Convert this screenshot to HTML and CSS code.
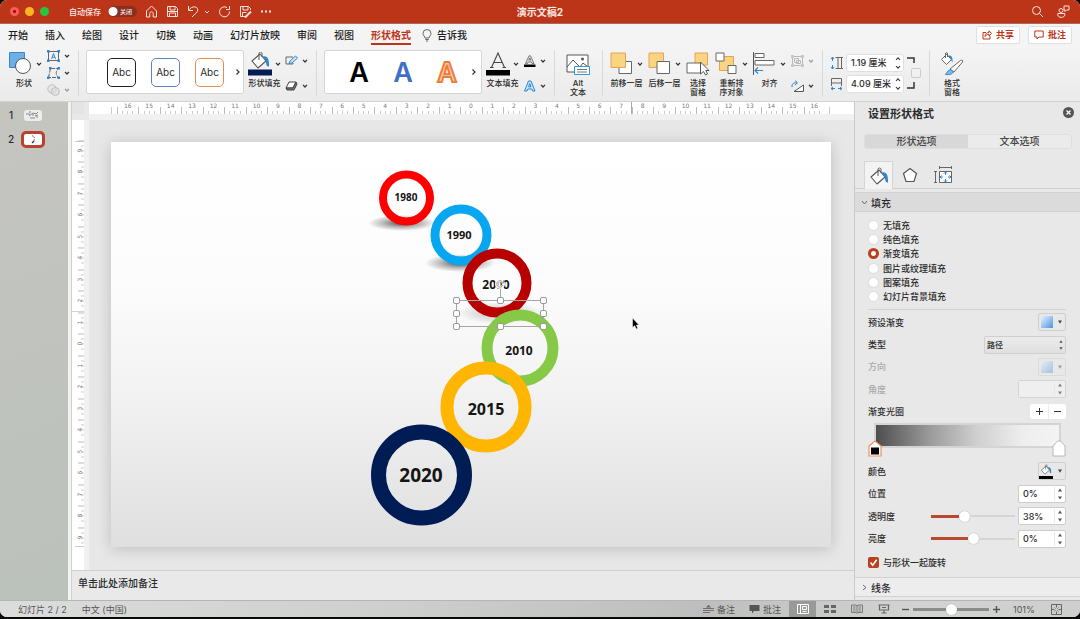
FILE: index.html
```html
<!DOCTYPE html>
<html lang="zh-CN">
<head>
<meta charset="utf-8">
<title>演示文稿2</title>
<link rel="stylesheet" href="styles.css">
</head>
<body>
<svg class="defs" aria-hidden="true">
  <symbol id="chev" viewBox="0 0 6 6"><path d="M1 1.8 3 4 5 1.8" fill="none" stroke="#333" stroke-width="1.2"/></symbol>
  <symbol id="bucket" viewBox="0 0 24 18"><path d="M4 10 12 3l6 7-8 7z" fill="#fff" stroke="#555" stroke-width="1.1" stroke-linejoin="round"/><path d="M11 9V2.500c0-2 3-2 3 0V6" fill="none" stroke="#555"/><path d="M14.500 5.500c4-1 7 1 6.500 10-2 0-3-1-3-5.500z" fill="#2b87d1"/></symbol>
  <symbol id="updown" viewBox="0 0 6 14"><path d="M1 4 3 1.800 5 4M1 10 3 12.200 5 10" fill="none" stroke="#333" stroke-width="1.100"/></symbol>
  <symbol id="tri" viewBox="0 0 6 14"><path d="M1 4.500 3 1.500 5 4.500zM1 9.500 3 12.500 5 9.500z" fill="#555"/></symbol>
  <symbol id="tridown" viewBox="0 0 6 6"><path d="M1 1.500h4L3 4.800z" fill="#444"/></symbol>
</svg>
<div class="window">
  <header class="titlebar">
    <div class="lights"><span class="light close"></span><span class="light min"></span><span class="light max"></span></div>
    <label class="autosave">自动保存 <input type="checkbox" aria-label="自动保存"><span class="toggle">关闭</span></label>
    <div class="quick">
      <button aria-label="主页"><svg width="13" height="13" viewBox="0 0 13 13"><path d="M1.500 6 6.500 1l5 5v6H8.200V8.500c0-2.300-3.400-2.300-3.400 0V12H1.500z"/></svg></button>
      <button aria-label="保存"><svg width="13" height="13" viewBox="0 0 13 13"><path d="M1.500 1.500h8l2 2v8h-10zM4 1.500V5h5V1.500M3.500 11.500V8h6v3.500M1.500 6.500h10"/></svg></button>
      <button aria-label="撤消" class="undo"><svg width="13" height="13" viewBox="0 0 13 13"><path d="M1.500 1v4.500H6M1.800 5C5 .5 10.800 1.200 10.800 5c0 2.500-3 4-5.800 7"/></svg><svg width="6" height="6" viewBox="0 0 6 6"><path d="M1 2l2 2 2-2"/></svg></button>
      <button aria-label="重复"><svg width="13" height="13" viewBox="0 0 13 13"><path d="M9 2.500A5 5 0 1 0 11.500 6.500M11.500 1v3.500H8"/></svg></button>
      <button aria-label="另存为"><svg width="13" height="13" viewBox="0 0 13 13"><path d="M6 11.500H1.500v-10h8l2 2V5M4 1.500V5h5V1.500M3.500 11V7.500h4"/><path d="M6 12.500 12 6.500" stroke-width="2.500"/></svg></button>
      <button aria-label="更多"><svg width="12" height="13" viewBox="0 0 12 13"><path d="M1 6.500h2M5 6.500h2M9 6.500h2" stroke-width="2"/></svg></button>
    </div>
    <h1 class="doc-title">演示文稿2</h1>
    <div class="title-right">
      <button aria-label="搜索"><svg width="13" height="13" viewBox="0 0 13 13"><circle cx="5.500" cy="5.500" r="4"/><path d="m8.500 8.500 3.500 3.500"/></svg></button>
      <button aria-label="共享者"><svg width="13" height="13" viewBox="0 0 13 13"><circle cx="4" cy="5.500" r="2"/><path d="M.8 8.500h7v1.300c0 3.400-7 3.400-7 0zM7 1h5v4H9.500L8 6.500V5H7z"/></svg></button>
    </div>
  </header>

  <nav class="tabs">
    <a href="#">开始</a><a href="#">插入</a><a href="#">绘图</a><a href="#">设计</a><a href="#">切换</a><a href="#">动画</a><a href="#">幻灯片放映</a><a href="#">审阅</a><a href="#">视图</a><a href="#" class="active">形状格式</a>
    <a href="#" class="tell"><svg width="10" height="13" viewBox="0 0 10 13"><path d="M3 9C3 7.500 1 6.500 1 4.500a4 4 0 0 1 8 0C9 6.500 7 7.500 7 9zM3.300 10.500h3.400M4 12h2" fill="none" stroke="#666"/></svg>告诉我</a>
    <div class="tab-actions">
      <button><svg width="10" height="10" viewBox="0 0 10 10"><path d="M4 2.500H1v6.500h7V6M3 6.500c0-3 2-4 4-4V.8L9.500 3.500 7 6V4.300C5 4.300 4 5 3 6.500z"/></svg>共享</button>
      <button><svg width="10" height="10" viewBox="0 0 10 10"><path d="M.8 1h8.400v6H5L3 9V7H.8z"/></svg>批注</button>
    </div>
  </nav>

  <div class="ribbon">
    <button class="big wide left-label"><svg class="ico" width="24" height="24" viewBox="0 0 24 24"><path d="M.5 .5h15v15H.5z" fill="#6cb0ea" stroke="#3b87cc"/><circle cx="14" cy="14" r="7.500" fill="#fff" stroke="#555"/></svg><svg class="chev"><use href="#chev"/></svg><span>形状</span></button>
    <div class="stack">
      <button aria-label="文本框"><svg width="13" height="12" viewBox="0 0 13 12"><path d="M1.500 1.500h10v9h-10z" fill="none" stroke="#666"/><path d="M4.500 9 6.500 3.500 8.500 9M5.200 7.200h2.600" fill="none" stroke="#2b87d1"/><path d="M0 0h2.500v2.500H0zM10.500 0H13v2.500h-2.500zM0 9.500h2.500V12H0zM10.500 9.500H13V12h-2.500z" fill="#2b87d1"/></svg><svg class="chev"><use href="#chev"/></svg></button>
      <button aria-label="编辑形状"><svg width="13" height="12" viewBox="0 0 13 12"><path d="M1.500 10.500 3.500 1.500h8c-3 3-3 6 0 9z" fill="none" stroke="#666" stroke-dasharray="4 1"/><path d="M2 0h2.500v2.500H2zM10.500 0H13v2.500h-2.500zM0 9.500h2.500V12H0zM10.500 9.500H13V12h-2.500z" fill="#2b87d1"/></svg><svg class="chev"><use href="#chev"/></svg></button>
      <button aria-label="合并形状" disabled><svg width="13" height="12" viewBox="0 0 13 12"><circle cx="5" cy="5" r="4.200" fill="#ddd" stroke="#888"/><circle cx="8.300" cy="7.500" r="4" fill="#ccc" fill-opacity=".6" stroke="#888"/></svg><svg class="chev"><use href="#chev"/></svg></button>
    </div>
    <i class="sep"></i>
    <div class="cluster">
      <div class="gallery">
        <button class="abc black">Abc</button><button class="abc blue">Abc</button><button class="abc orange">Abc</button>
        <button class="next" aria-label="更多样式"><svg width="6" height="8" viewBox="0 0 6 8"><path d="M1.500 1.500 4 4 1.500 6.500" fill="none" stroke="#333" stroke-width="1.200"/></svg></button>
      </div>
      <button class="big wide"><svg class="ico" width="24" height="24" viewBox="0 0 24 24"><use href="#bucket" width="24" height="18" y="-1"/><path d="M0 17.500h24v6H0z" fill="#001c55"/></svg><svg class="chev"><use href="#chev"/></svg><span>形状填充</span></button>
      <div class="stack two">
        <button aria-label="形状轮廓"><svg width="13" height="12" viewBox="0 0 13 12"><path d="M8 2H1v7h7V8" fill="none" stroke="#666"/><path d="M4 8.500 5 6l5.500-5L12.500 3 7 8z" fill="#cfe6f8" stroke="#2b87d1"/></svg><svg class="chev"><use href="#chev"/></svg></button>
        <button aria-label="形状效果"><svg width="13" height="12" viewBox="0 0 13 12"><path d="M4 2h7L8 8H1z" fill="#fff" stroke="#444"/><path d="M1 8h7l3-6 1 2-3 6H2z" fill="#777" stroke="#444"/></svg><svg class="chev"><use href="#chev"/></svg></button>
      </div>
    </div>
    <i class="sep"></i>
    <div class="cluster">
      <div class="gallery art">
        <button aria-label="黑色填充"><svg width="28" height="38" viewBox="0 0 28 38"><text x="14" y="29" fill="#000">A</text></svg></button>
        <button aria-label="蓝色填充"><svg width="28" height="38" viewBox="0 0 28 38"><text x="14" y="29" fill="#3f6fc6">A</text></svg></button>
        <button aria-label="橙色轮廓"><svg width="28" height="38" viewBox="0 0 28 38"><text class="outlined" x="14" y="29" fill="#fbd0ae" stroke="#ed7d3a">A</text></svg></button>
        <button class="next" aria-label="更多艺术字"><svg width="6" height="8" viewBox="0 0 6 8"><path d="M1.500 1.500 4 4 1.500 6.500" fill="none" stroke="#333" stroke-width="1.200"/></svg></button>
      </div>
      <button class="big wide"><svg class="ico" width="24" height="24" viewBox="0 0 24 24"><path d="M5.500 15.500 12 1l6.500 14.500M8 10.500h8M4 15.500h3.500M16.500 15.500H20" fill="none" stroke="#444" stroke-width="1.100"/><path d="M0 18h24v5.500H0z"/></svg><svg class="chev"><use href="#chev"/></svg><span>文本填充</span></button>
      <div class="stack two">
        <button aria-label="文本轮廓"><svg width="13" height="12" viewBox="0 0 13 12"><path d="M2.500 8.500 6 .8h1.500l3.500 7.700H9L8.300 7H5.200L4.500 8.500zM5.800 5h2L6.800 3z" fill="#ddd" stroke="#666" stroke-width=".8"/><path d="M1 9.500h11.500V12H1z"/></svg><svg class="chev"><use href="#chev"/></svg></button>
        <button aria-label="文本效果"><svg width="13" height="12" viewBox="0 0 13 12"><path d="M1.500 11 5.500 1h2.500l4 10H9.500L8.800 9H4.800L4 11zM5.500 6.800h2.500L6.800 3.500z" fill="#cfe6f8" stroke="#2b87d1"/></svg><svg class="chev"><use href="#chev"/></svg></button>
      </div>
    </div>
    <i class="sep"></i>
    <button class="big single alt"><svg class="ico" width="24" height="24" viewBox="0 0 24 24"><path d="M1 3h21v17H1z" fill="#fff" stroke="#555"/><path d="m1 15 6-7 7 7 3-4 5 4" fill="none" stroke="#555"/><circle cx="16.500" cy="7" r="1.500" fill="#555"/><path d="M8.500 14.500h15v8h-15z" fill="#fff" stroke="#2b9bd4"/><path d="M11 17.500h10M11 20h10" stroke="#777"/></svg><span>Alt<br>文本</span></button>
    <i class="sep"></i>
    <button class="big wide"><svg class="ico" width="24" height="24" viewBox="0 0 24 24"><path d="M9 9.500h12.500v12H9z" fill="#fff" stroke="#666"/><path d="M1 1h14.500v14.500H1z" fill="#f9d583" stroke="#eba155"/></svg><svg class="chev"><use href="#chev"/></svg><span>前移一层</span></button>
    <button class="big wide"><svg class="ico" width="24" height="24" viewBox="0 0 24 24"><path d="M1 1h14.500v14.500H1z" fill="#f9d583" stroke="#eba155"/><path d="M9 9.500h12.500v12H9z" fill="#fff" stroke="#666"/></svg><svg class="chev"><use href="#chev"/></svg><span>后移一层</span></button>
    <button class="big single"><svg class="ico" width="24" height="24" viewBox="0 0 24 24"><path d="M9 1h12.500v12H9z" fill="#f9d583" stroke="#eba155"/><path d="M1 11h14v10H1z" fill="#fff" stroke="#666"/><path d="M14.500 10v12l3-2.500 2 3.500 2-1-1.700-3.500H23z" fill="#fff" stroke="#555"/></svg><span>选择<br>窗格</span></button>
    <button class="big wide"><svg class="ico" width="24" height="24" viewBox="0 0 24 24"><path d="M4.500 4.500h14v14h-14z" fill="#f9d583" stroke="#eba155"/><path d="M1 1h8v8H1zM13 13.500h8v8h-8z" fill="#fff" stroke="#666"/></svg><svg class="chev"><use href="#chev"/></svg><span>重新排<br>序对象</span></button>
    <button class="big wide"><svg class="ico" width="24" height="24" viewBox="0 0 24 24"><path d="M.5 0v23" stroke="#555"/><path d="M2 1.500h9v4H2zM2 8.500h19v4.500H2z" fill="#fff" stroke="#666"/><path d="M10 18.500H2M5 15.500 2 18.500l3 3" fill="none" stroke="#2b87d1" stroke-width="1.200"/></svg><svg class="chev"><use href="#chev"/></svg><span>对齐</span></button>
    <div class="stack two">
      <button aria-label="组合" disabled><svg width="13" height="12" viewBox="0 0 13 12"><path d="M1.500 1.500h10v9h-10zM3.500 3.500h4v4h-4zM5.500 5.500h4v3h-4z" fill="none" stroke="#777"/><path d="M0 0h3v3H0zM10 0h3v3h-3zM0 9h3v3H0zM10 9h3v3h-3z" fill="#999"/></svg><svg class="chev"><use href="#chev"/></svg></button>
      <button aria-label="旋转"><svg width="13" height="12" viewBox="0 0 13 12"><path d="M12.500 5v6.500H3z" fill="#fff" stroke="#555"/><path d="M1 7c-.5-3 2-5 5-4M4 .5l2.500 2.300L4 5" fill="none" stroke="#2b87d1"/></svg><svg class="chev"><use href="#chev"/></svg></button>
    </div>
    <i class="sep"></i>
    <div class="size">
      <svg width="13" height="14" viewBox="0 0 13 14"><path d="M5.500 1.500H13M5.500 12.500H13M8 1.500v11M11.500 1.500v11" stroke="#666" fill="none"/><path d="M2.500 1v4M2.500 9v4M1 3l1.500-2L4 3M1 11l1.500 2L4 11" stroke="#2b87d1" fill="none"/></svg>
      <div class="spin"><input type="text" value="1.19 厘米" aria-label="高度"><svg><use href="#updown"/></svg></div>
      <svg width="13" height="14" viewBox="0 0 13 14"><path d="M1.500 9V1.500h10V9M1.500 6h10" stroke="#666" fill="none"/><path d="M1 11.500h4M8 11.500h4M3 10 1 11.500 3 13M10 10l2 1.500-2 1.500" stroke="#2b87d1" fill="none"/></svg>
      <div class="spin"><input type="text" value="4.09 厘米" aria-label="宽度"><svg><use href="#updown"/></svg></div>
      <div class="lock"><svg width="8" height="7" viewBox="0 0 8 7"><path d="M0 1h7v5" fill="none" stroke="#333" stroke-width="1.500"/></svg><input type="checkbox" aria-label="锁定纵横比"><svg width="8" height="7" viewBox="0 0 8 7"><path d="M0 6h7V0" fill="none" stroke="#333" stroke-width="1.500"/></svg></div>
    </div>
    <i class="sep"></i>
    <button class="big single pane-btn"><svg class="ico" width="24" height="24" viewBox="0 0 24 24"><path d="M1.500 7.500 6.500 2.500l5 5-5 5z" fill="#fff" stroke="#666"/><path d="M5.500 6V2c0-1.800 2-1.800 2 0v3" fill="none" stroke="#666"/><path d="M8 3.500c3-.5 5 1 4.500 7l-2-3.500z" fill="#2b87d1"/><path d="M10 17 20.500 8.500c2-1 2.500 0 2 1.500L14 20z" fill="#fff" stroke="#666"/><path d="M13.500 20c-2 3-5 2.500-8 2.500 1.500-2 3-5.500 6-4.500z" fill="#7db9ea" stroke="#2b87d1"/></svg><span>格式<br>窗格</span></button>
  </div>

  <main class="work">
    <aside class="thumbs">
      <button class="thumb"><b>1</b><span class="mini"><svg width="18" height="11" viewBox="0 0 18 11"><path d="M2 4h4M5 6l4-3 3 1 2-2M6 8h5M11 6l3-1" fill="none" stroke="#789"/><path d="M5 2h2M12 7h2M8 5h2" stroke="#c65"/></svg></span></button>
      <button class="thumb current"><b>2</b><span class="mini"><svg width="18" height="11" viewBox="0 0 18 11"><path d="M8 1.500 10 3l.5 1.500" fill="none" stroke="#c33" stroke-dasharray="1.500 .5"/><path d="M10.500 5 10 7" stroke="#8a4"/><path d="M10 7 8 9" stroke="#236" stroke-width="1.500"/></svg></span></button>
    </aside>

    <section class="center">
      <div class="editor">
        <div class="corner"></div>
        <div class="ruler-h"><span>16</span><span>15</span><span>14</span><span>13</span><span>12</span><span>11</span><span>10</span><span>9</span><span>8</span><span>7</span><span>6</span><span>5</span><span>4</span><span>3</span><span>2</span><span>1</span><span>0</span><span>1</span><span>2</span><span>3</span><span>4</span><span>5</span><span>6</span><span>7</span><span class="mark">8</span><span>9</span><span>10</span><span>11</span><span>12</span><span>13</span><span>14</span><span>15</span><span>16</span></div>
        <div class="ruler-v"><span>9</span><span>8</span><span>7</span><span>6</span><span>5</span><span>4</span><span>3</span><span>2</span><span class="mark">1</span><span>0</span><span>1</span><span>2</span><span>3</span><span>4</span><span>5</span><span>6</span><span>7</span><span>8</span><span>9</span></div>
        <div class="canvas">
          <div class="slide">
            <svg viewBox="0 0 720 405" class="art-board">
              <defs><radialGradient id="sh"><stop offset="0" stop-color="#000" stop-opacity=".7"/><stop offset=".5" stop-color="#000" stop-opacity=".3"/><stop offset="1" stop-color="#000" stop-opacity="0"/></radialGradient></defs>
              <ellipse cx="291" cy="81" rx="34" ry="8" fill="url(#sh)"/>
              <circle cx="295.500" cy="56" r="23.500" stroke="#fe0000" stroke-width="8"/>
              <ellipse cx="349" cy="121" rx="35" ry="9" fill="url(#sh)"/>
              <circle cx="350" cy="93" r="26" stroke="#06a7f0" stroke-width="9"/>
              <ellipse cx="389" cy="171" rx="43" ry="11" fill="url(#sh)" opacity=".4"/>
              <circle cx="386" cy="141" r="29.500" stroke="#b90000" stroke-width="10"/>
              <circle cx="409" cy="206" r="33" stroke="#86c946" stroke-width="11"/>
              <circle cx="375" cy="265" r="39" stroke="#ffb600" stroke-width="13"/>
              <circle cx="310.500" cy="333" r="43" stroke="#001c55" stroke-width="15"/>
              <g class="years">
                <text x="295" y="59" font-size="10">1980</text>
                <text x="348" y="97" font-size="11">1990</text>
                <text x="385" y="147" font-size="12">2000</text>
                <text x="408" y="213" font-size="12">2010</text>
                <text x="375" y="273" font-size="16">2015</text>
                <text x="310" y="340" font-size="19">2020</text>
              </g>
              <g stroke="#a5a5a5" fill="none"><path d="M345.500 158.500h87v26h-87zM389.500 158.500v-12"/></g>
              <circle cx="389" cy="142" r="3.500" stroke="#fff" stroke-width="3"/>
              <path d="M391.500 140a3.200 3.200 0 1 0 .5 3M392.500 138.500v2.500H390" fill="none" stroke="#888" stroke-width=".9"/>
              <g fill="#fff" stroke="#999"><rect x="342.500" y="155.500" width="6" height="6" rx="1.500"/><rect x="386.500" y="155.500" width="6" height="6" rx="1.500"/><rect x="429.500" y="155.500" width="6" height="6" rx="1.500"/><rect x="342.500" y="168.500" width="6" height="6" rx="1.500"/><rect x="429.500" y="168.500" width="6" height="6" rx="1.500"/><rect x="342.500" y="181.500" width="6" height="6" rx="1.500"/><rect x="386.500" y="181.500" width="6" height="6" rx="1.500"/><rect x="429.500" y="181.500" width="6" height="6" rx="1.500"/></g>
              <path d="M521.500 176v9.500l2.200-1.800 1.600 3.300 1.500-.7-1.500-3.200h2.700z" fill="#000" stroke="#fff" stroke-width=".5"/>
            </svg>
          </div>
        </div>
      </div>
      <div class="notes">单击此处添加备注</div>
    </section>

    <aside class="pane">
      <div class="pane-head"><h2>设置形状格式</h2><button aria-label="关闭窗格"><svg width="11" height="11" viewBox="0 0 11 11"><circle cx="5.500" cy="5.500" r="5.500" fill="#555"/><path d="m3.500 3.500 4 4M7.500 3.500l-4 4" stroke="#fff" stroke-width="1.200"/></svg></button></div>
      <div class="segmented"><button class="on">形状选项</button><button>文本选项</button></div>
      <div class="icon-tabs">
        <button class="on" aria-label="填充与线条"><svg width="20" height="18" viewBox="2 0 20 18"><use href="#bucket" width="24" height="18"/></svg></button>
        <button aria-label="效果"><svg width="16" height="16" viewBox="0 0 16 16"><path d="m8 1.500 6.500 5-2.500 8H4l-2.500-8z" fill="#fff" stroke="#555" stroke-width="1.200"/></svg></button>
        <button aria-label="大小与属性"><svg width="18" height="18" viewBox="0 0 18 18"><path d="M5.500 5.500h12v11h-12z" fill="#fff" stroke="#666"/><path d="M5 1.500h13M5.500 0v3M17.500 0v3M1.500 5v12M0 5.500h3M0 16.500h3" stroke="#666"/><path d="M11.500 6v3M11.500 13v3M6 11h3M14 11h3M10 7.500 11.500 6 13 7.500M10 14.500l1.500 1.500 1.500-1.500M7.500 9.500 6 11l1.500 1.500M15.500 9.500 17 11l-1.500 1.500" fill="none" stroke="#2b87d1"/></svg></button>
      </div>
      <button class="section"><svg width="7" height="7" viewBox="0 0 7 7"><path d="M1 2l2.500 3L6 2" fill="none" stroke="#666"/></svg>填充</button>
      <div class="pane-body">
        <div class="radios">
          <label><input type="radio" name="fill">无填充</label>
          <label><input type="radio" name="fill">纯色填充</label>
          <label><input type="radio" name="fill" checked>渐变填充</label>
          <label><input type="radio" name="fill">图片或纹理填充</label>
          <label><input type="radio" name="fill">图案填充</label>
          <label><input type="radio" name="fill">幻灯片背景填充</label>
        </div>
        <div class="rows first">
          <div class="row"><span>预设渐变</span><button class="swatch" aria-label="预设渐变"><i class="grad"></i><svg><use href="#tridown"/></svg></button></div>
          <div class="row"><label for="kind">类型</label><div class="pick"><select id="kind"><option>路径</option></select><svg><use href="#tri"/></svg></div></div>
          <div class="row off"><span>方向</span><button class="swatch" aria-label="方向" disabled><i class="grad"></i><svg><use href="#tridown"/></svg></button></div>
          <div class="row off"><label for="angle">角度</label><div class="num"><input id="angle" type="text" disabled><svg><use href="#tri"/></svg></div></div>
          <div class="row"><span>渐变光圈</span><div class="plusminus"><button aria-label="添加光圈"><svg width="9" height="9" viewBox="0 0 9 9"><path d="M4.500 1v7M1 4.500h7"/></svg></button><button aria-label="删除光圈"><svg width="9" height="9" viewBox="0 0 9 9"><path d="M1 4.500h7"/></svg></button></div></div>
        </div>
        <div class="stops">
          <div class="bar"></div>
          <div class="handles">
            <button aria-label="光圈 1"><svg width="14" height="17" viewBox="0 0 14 17"><path d="M1 6 7 1l6 5v10H1z" fill="#fff" stroke="#e9955c" stroke-width="1.200"/><path d="M3 7.500h8v7H3z"/></svg></button>
            <button aria-label="光圈 2"><svg width="14" height="17" viewBox="0 0 14 17"><path d="M1 6 5.500 1h3L13 6v10H1z" fill="#fff" stroke="#aaa" stroke-width=".8"/></svg></button>
          </div>
        </div>
        <div class="rows">
          <div class="row"><span>颜色</span><button class="swatch" aria-label="颜色"><svg class="paint" width="14" height="15" viewBox="0 0 14 15"><use href="#bucket" width="14" height="11"/><path d="M0 12h14v3H0z"/></svg><svg><use href="#tridown"/></svg></button></div>
          <div class="row"><label for="pos">位置</label><div class="num"><input id="pos" type="text" value="0%"><svg><use href="#tri"/></svg></div></div>
          <div class="row"><label for="tr">透明度</label><input class="slider" type="range" value="38" style="--v:38%" aria-label="透明度滑块"><div class="num"><input id="tr" type="text" value="38%"><svg><use href="#tri"/></svg></div></div>
          <div class="row"><label for="br">亮度</label><input class="slider" type="range" value="50" style="--v:50%" aria-label="亮度滑块"><div class="num"><input id="br" type="text" value="0%"><svg><use href="#tri"/></svg></div></div>
        </div>
        <label class="rotate"><input type="checkbox" checked><svg width="11" height="11" viewBox="0 0 11 11"><path d="m2.500 5.500 2.200 2.700 4-5.500" fill="none" stroke="#fff" stroke-width="1.600"/></svg>与形状一起旋转</label>
      </div>
      <button class="section lines"><svg width="7" height="7" viewBox="0 0 7 7"><path d="M2 1l3 2.500L2 6" fill="none" stroke="#666"/></svg>线条</button>
    </aside>
  </main>

  <footer class="status">
    <span>幻灯片 2 / 2</span><span>中文 (中国)</span>
    <div class="status-right">
      <button class="txt"><svg width="11" height="10" viewBox="0 0 11 10"><path d="M0 4.500h11M0 6.500h11M0 8.500h7" stroke="#666" stroke-width=".9"/><path d="M3 3.500 5.500.8 8 3.500z" fill="#666"/></svg>备注</button>
      <button class="txt"><svg width="11" height="10" viewBox="0 0 11 10"><path d="M.5 1h10v6H5L3 9.500V7H.5z" fill="#555"/></svg>批注</button>
      <button class="view on" aria-label="普通视图"><svg width="12" height="10" viewBox="0 0 12 10"><path d="M.5.5h11v9H.5zM3.500.5v9M5.500 2.500h4v3h-4zM5.500 7.500h4" fill="none" stroke="#fff"/></svg></button>
      <button class="view" aria-label="幻灯片浏览"><svg width="12" height="10" viewBox="0 0 12 10"><path d="M0 1h5v3H0zM7 1h5v3H7zM0 6h5v3H0zM7 6h5v3H7z" fill="#666"/></svg></button>
      <button class="view" aria-label="阅读视图"><svg width="12" height="10" viewBox="0 0 12 10"><path d="M.5 1h4.500l1 1 1-1h4.500v7.500H7l-1 1-1-1H.5zM6 2v7M2 3h2.500M2 5h2.500M2 7h2.500M7.500 3H10M7.500 5H10M7.500 7H10" fill="none" stroke="#666" stroke-width=".8"/></svg></button>
      <button class="view" aria-label="幻灯片放映"><svg width="12" height="10" viewBox="0 0 12 10"><path d="M.5 1h11M1.500 1v5h9V1M6 6v2.500M3.500 9h5M4 3.500h4" fill="none" stroke="#666" stroke-width="1.200"/></svg></button>
      <div class="zoom"><button aria-label="缩小"><svg width="7" height="7" viewBox="0 0 7 7"><path d="M0 3.500h7" stroke="#555" stroke-width="1.400"/></svg></button><input type="range" class="zoomer" value="50" aria-label="缩放"><button aria-label="放大"><svg width="7" height="7" viewBox="0 0 7 7"><path d="M0 3.500h7M3.500 0v7" stroke="#555" stroke-width="1.400"/></svg></button></div>
      <span class="pct">101%</span>
      <button class="fit" aria-label="适应窗口"><svg width="11" height="11" viewBox="0 0 11 11"><path d="M.5.500h10v10H.5zM5.500 1v2.500M5.500 7.500V10M1 5.500h2.500M7.500 5.500H10M3.500 3.500l1 1M7.500 3.500l-1 1M3.500 7.500l1-1M7.500 7.500l-1-1" fill="none" stroke="#666"/></svg></button>
    </div>
  </footer>
</div>
</body>
</html>
```

FILE: styles.css
```css
* { box-sizing: border-box; }
body { margin: 0; background: #080a08; color: #2b2b2b; font: 500 9px Inter, "Noto Sans CJK SC", sans-serif; }
button, input, select { margin: 0; padding: 0; border: 0; background: none; color: inherit; font: inherit; }
h1, h2 { margin: 0; font-weight: 700; }
a { color: inherit; text-decoration: none; }
svg { display: block; flex: none; }
.defs { position: absolute; width: 0; height: 0; }
.window { display: flex; flex-direction: column; height: calc(100vh - 2px); overflow: hidden; border-radius: 7px; background: #e8e8e8; }

.titlebar { display: flex; align-items: center; flex: none; height: 24px; padding: 0 10px; position: relative; background: #bd3519; border-bottom: 1px solid #a96a5a; color: #fbe9e4; }
.lights { display: flex; gap: 6px; }
.light { width: 9px; height: 9px; border-radius: 50%; }
.close { background: radial-gradient(circle, #8c1010 0 1px, #fc5b53 2px); }
.min { background: #fdb427; }
.max { background: #28c440; }
.autosave { display: flex; align-items: center; gap: 7px; margin-left: 20px; font-size: 8px; position: relative; }
.autosave input { position: absolute; opacity: 0; }
.toggle { width: 29px; height: 11px; padding-right: 5px; border-radius: 6px; background: radial-gradient(circle at 5px 50%, #fff 0 4px, transparent 5px), #873022; font-size: 6px; line-height: 11px; text-align: right; }
.quick { display: flex; align-items: center; gap: 8px; margin-left: 8px; }
.quick path, .title-right path, .title-right circle { fill: none; stroke: #fbe3dc; stroke-width: 1; }
.quick path[stroke-width] { stroke-width: 2; }
.undo { display: flex; align-items: center; gap: 4px; }
.doc-title { position: absolute; left: 50%; transform: translateX(-50%); font-size: 10px; line-height: 24px; }
.title-right { display: flex; gap: 13px; margin-left: auto; }

.tabs { display: flex; align-items: center; gap: 17px; flex: none; height: 22px; padding: 0 8px; background: #f4f4f4; font-size: 10px; color: #1c1c1c; line-height: 20px; }
.tabs .active { color: #bd3519; font-weight: 700; box-shadow: inset 0 -2px #bd3519; }
.tell { display: flex; align-items: center; gap: 5px; margin-left: -6px; }
.tab-actions { display: flex; gap: 8px; margin-left: auto; }
.tab-actions button { display: flex; align-items: center; gap: 4px; height: 18px; padding: 0 5px; border: 1px solid #e0e0e0; border-radius: 2px; background: #fff; color: #bd3519; font-size: 9px; font-weight: 700; }
.tab-actions path { fill: none; stroke: #bd3519; }

.ribbon { display: flex; gap: 5px; flex: none; height: 56px; padding: 4px 0 4px 9px; background: linear-gradient(#f4f4f4, #ebebeb); border-bottom: 1px solid #d2d2d2; }
.sep { flex: none; width: 1px; height: 46px; margin: 0 2px 0 3px; background: #d9d9d9; }
.cluster { display: flex; gap: 4px; }
.big { display: grid; grid-template-columns: 24px 9px; align-content: start; align-items: center; padding-top: 2px; font-size: 8px; line-height: 9px; white-space: nowrap; }
.big span { grid-column: 1 / -1; padding-top: 3px; }
.big.left-label span { text-align: left; padding-left: 7px; }
.single { grid-template-columns: 24px; justify-content: center; }
.alt { width: 32px; }
.pane-btn { width: 30px; }
.chev { width: 6px; height: 6px; justify-self: end; }
.stack { display: flex; flex-direction: column; justify-content: space-between; width: 23px; height: 46px; }
.stack.two { padding: 5px 0 4px; }
.stack button { display: flex; align-items: center; justify-content: space-between; }
button:disabled { opacity: .45; }
.gallery { display: flex; align-items: center; gap: 15px; width: 158px; height: 44px; padding-left: 20px; border: 1px solid #d6d6d6; border-radius: 2px; background: #fff; }
.abc { width: 29px; height: 29px; border: 1px solid; border-radius: 5px; font: 10px Inter, sans-serif; }
.abc.black { border-color: #222; }
.abc.blue { border-color: #5b83c4; }
.abc.orange { border-color: #e88d50; }
.next { margin-left: -4px; }
.art { gap: 16px; }
.art .next { margin-left: -6px; }
.art text { font: 600 27px Inter, sans-serif; text-anchor: middle; }
.art .outlined { stroke-width: 2px; }
.size { display: grid; grid-template-columns: 13px 58px 14px; grid-template-rows: 18px 18px; gap: 3px; align-content: center; align-items: center; height: 46px; }
.lock { grid-area: 1 / 3 / 3 / 4; display: flex; flex-direction: column; gap: 4px; }
.lock input { appearance: none; align-self: flex-end; width: 10px; height: 10px; border: 1px solid #ccc; border-radius: 2px; background: #f1f1f1; }
.spin { display: flex; align-items: center; height: 18px; padding: 0 2px 0 4px; border: 1px solid #e0e0e0; border-radius: 3px; background: #fff; }
.spin input { flex: 1; min-width: 0; }
.spin svg { width: 6px; height: 14px; }

.work { display: flex; flex: 1; min-height: 0; }
.thumbs { display: flex; flex-direction: column; gap: 8px; flex: none; width: 72px; padding: 5px 8px; background: linear-gradient(160deg, #c5c5c0, #bbc1bb); border-right: 1px solid #cfcfcf; box-shadow: inset -3px 0 #f3f3f3; }
.thumb { display: flex; align-items: center; gap: 7px; height: 16px; }
.thumb b { width: 6px; font-size: 10px; font-weight: 500; }
.mini { margin: 0 3px; border-radius: 3px; background: #eceeed; }
.current .mini { margin: 0; border: 3px solid #b8422d; border-radius: 5px; background: #fff; }
.center { display: flex; flex-direction: column; flex: 1; min-width: 0; }
.editor { display: grid; grid-template: 18px 1fr / 17px 1fr; flex: 1; min-height: 0; }
.corner { width: 12px; height: 12px; background: #e4e4e4; }
.ruler-h, .ruler-v { display: grid; color: #777; font: 6px/8px "DejaVu Sans", sans-serif; text-align: center; }
.ruler-h { grid-auto-flow: column; grid-auto-columns: 1fr; align-items: start; padding: 0 29px 0 28px; border-bottom: 6px solid #f1f1f1; background: linear-gradient(#ccc, #ccc) 22px 5px / 1px 7px no-repeat, linear-gradient(#ccc, #ccc) calc(100% - 24px) 5px / 1px 7px no-repeat, #fff; }
.ruler-h span { height: 12px; background: linear-gradient(#bbb, #bbb) 0 100% / 1px 7px no-repeat, linear-gradient(#ccc, #ccc) 25% 100% / 1px 3px no-repeat, linear-gradient(#ccc, #ccc) 50% 100% / 1px 3px no-repeat, linear-gradient(#ccc, #ccc) 75% 100% / 1px 3px no-repeat; }
.ruler-h .mark { box-shadow: -1px 0 #aaa; }
.ruler-v { grid-auto-rows: 1fr; padding: 20px 0 22px; border-right: 5px solid #f1f1f1; background: linear-gradient(#ccc, #ccc) 100% 21px / 9px 1px no-repeat, linear-gradient(#ccc, #ccc) 100% calc(100% - 23px) / 9px 1px no-repeat, #fff; }
.ruler-v span { writing-mode: vertical-rl; transform: rotate(180deg); text-align: center; line-height: 8px; padding-right: 4px; display: flex; flex-direction: column; align-items: center; background: linear-gradient(#bbb, #bbb) 0 100% / 6px 1px no-repeat, linear-gradient(#ccc, #ccc) 0 25% / 3px 1px no-repeat, linear-gradient(#ccc, #ccc) 0 50% / 3px 1px no-repeat, linear-gradient(#ccc, #ccc) 0 75% / 3px 1px no-repeat; }
.ruler-v .mark { box-shadow: 0 1px #aaa; }
.canvas { display: flex; padding: 22px 23px 23px 22px; background: #e7e7e7; min-height: 0; min-width: 0; }
.slide { flex: 1; min-width: 0; background: linear-gradient(#fff, #fcfcfc 35%, #f3f3f3 60%, #dfdfdf); box-shadow: 0 2px 14px rgba(0, 0, 0, .18); }
.art-board { width: 100%; height: 100%; }
.art-board circle { fill: none; }
.years text { font-family: "Open Sans", sans-serif; font-weight: 700; text-anchor: middle; fill: #151515; }
.notes { flex: none; height: 30px; padding: 4px 6px; border-top: 1px solid #d0d0d0; background: #e9e9e9; font-size: 10px; line-height: 16px; }

.pane { display: flex; flex-direction: column; flex: none; width: 226px; border-left: 1px solid #cacaca; background: #e8e8e8; }
.pane-head { display: flex; align-items: center; justify-content: space-between; height: 21px; padding: 0 6px 0 13px; }
.pane-head h2 { font-size: 11px; }
.segmented { display: grid; grid-template-columns: 1fr 1fr; height: 15px; margin: 11px 8px 12px 9px; border: 1px solid #dedede; border-radius: 3px; background: #ebebeb; color: #444; font-size: 10px; line-height: 13px; }
.segmented .on { background: #d8d8d8; }
.icon-tabs { display: flex; flex: none; height: 28px; padding-left: 9px; border-bottom: 1px solid #cdcdcd; }
.icon-tabs button { display: grid; place-items: center; width: 33px; height: 28px; }
.icon-tabs .on { width: 29px; border: 1px solid #d5d5d5; border-bottom: 0; background: #f3f3f3; }
.section { display: flex; align-items: center; gap: 3px; flex: none; height: 20px; margin-top: 3px; padding: 0 6px; border-top: 1px solid #d2d2d2; border-bottom: 1px solid #d2d2d2; background: #dbdbdb; font-size: 10px; }
.lines { margin-top: auto; margin-bottom: 3px; background: #ededed; }
.pane-body { padding: 6px 14px 0 13px; }
.radios { display: flex; flex-direction: column; justify-content: space-between; height: 86px; }
.radios label { display: flex; align-items: center; gap: 4px; height: 14px; }
.radios input { appearance: none; width: 11px; height: 11px; border: 1px solid #dcdcdc; border-radius: 50%; background: #fff; }
.radios input:checked { border: 3px solid #b8401e; }
.rows { display: grid; grid-auto-rows: 1fr; height: 90px; }
.rows.first { height: 114px; margin-top: 5px; padding-top: 1px; border-top: 1px solid #d3d3d3; }
.row { display: flex; align-items: center; justify-content: space-between; }
.off { color: #aaa; }
.swatch { display: flex; align-items: center; justify-content: flex-end; gap: 4px; width: 28px; height: 18px; padding-right: 2px; border: 1px solid #cfcfcf; border-radius: 2px; background: #e8e8e8; }
.swatch svg:last-child { width: 6px; height: 6px; }
.grad { width: 12px; height: 12px; background: linear-gradient(135deg, #e8f3fd, #4c94e0); }
.pick { position: relative; width: 82px; height: 18px; }
.pick select { appearance: none; width: 100%; height: 100%; padding-left: 2px; border: 1px solid #cfcfcf; border-radius: 2px; background: linear-gradient(#ebebeb, #e0e0e0); font-size: 8px; }
.pick svg { position: absolute; right: 2px; top: 3px; width: 6px; height: 12px; pointer-events: none; }
.num { display: flex; align-items: center; width: 48px; height: 18px; padding: 0 2px 0 4px; border: 1px solid #ccc; border-radius: 2px; background: #fff; }
.num input { flex: 1; min-width: 0; height: 14px; border-right: 1px solid #e8e8e8; }
.num svg { width: 6px; height: 14px; margin-left: 2px; }
.off .num { background: #f3f3f3; opacity: .7; }
.plusminus { display: flex; border-radius: 3px; background: #fff; }
.plusminus button { display: grid; place-items: center; width: 18px; height: 15px; }
.plusminus button + button { border-left: 1px solid #eee; }
.plusminus path { stroke: #333; stroke-width: 1; }
.stops { height: 34px; margin-bottom: 3px; }
.bar { height: 25px; margin: 0 5px 0 6px; border: 2px solid #d4d4d4; background: linear-gradient(90deg, #4e4e4e, #9c9c9c 30%, #cfcfcf 55%, #eee 80%, #f3f3f3); }
.handles { display: flex; justify-content: space-between; margin-top: -8px; position: relative; }
.slider, .zoomer { appearance: none; height: 12px; }
.slider { width: 84px; margin-left: auto; margin-right: 3px; background: linear-gradient(#b8492f, #b8492f) 0 50% / var(--v) 3px no-repeat, linear-gradient(#d5d5d5, #d5d5d5) 0 50% / 100% 2px no-repeat; }
.slider::-webkit-slider-thumb, .zoomer::-webkit-slider-thumb { appearance: none; width: 11px; height: 11px; border-radius: 50%; background: #fff; box-shadow: 0 0 1px #888; }
.rotate { display: flex; align-items: center; gap: 4px; position: relative; height: 24px; }
.rotate input { appearance: none; width: 11px; height: 11px; border-radius: 2px; background: #b8401e; }
.rotate svg { position: absolute; left: 0; }

.status { display: flex; align-items: center; gap: 15px; flex: none; height: 17px; padding: 0 18px; border-top: 1px solid #b5b5b5; background: linear-gradient(90deg, #dcdcdc, #cfcfcf 35%, #bebebe 65%, #d3d3d3 85%, #cecece); color: #555; font-weight: 400; }
.status-right { display: flex; align-items: center; height: 100%; margin-left: auto; }
.txt { display: flex; align-items: center; gap: 3px; margin-right: 14px; }
.txt + .txt { margin-right: 8px; }
.view { display: grid; place-items: center; width: 27px; height: 100%; }
.view.on { background: #999; }
.zoom { display: flex; align-items: center; gap: 4px; margin: 0 13px 0 5px; }
.zoomer { width: 76px; background: linear-gradient(#8c8c8c, #8c8c8c) 0 50% / 100% 3px no-repeat; }
.pct { width: 23px; margin-right: 15px; }
```
